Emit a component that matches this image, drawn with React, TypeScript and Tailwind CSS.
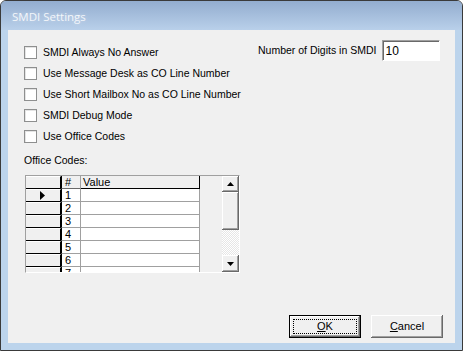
const options = [
  'SMDI Always No Answer',
  'Use Message Desk as CO Line Number',
  'Use Short Mailbox No as CO Line Number',
  'SMDI Debug Mode',
  'Use Office Codes',
];

const rows = ['1', '2', '3', '4', '5', '6', '7'];

const raised =
  'bg-[#f0f0f0] shadow-[inset_-1px_-1px_#696969,inset_1px_1px_#ffffff,inset_-2px_-2px_#a0a0a0]';

function Checkbox({ label }: { label: string }) {
  return (
    <label className="flex h-[21px] items-center gap-[6px]">
      <span className="box-border h-[13px] w-[13px] border border-[#8e8f8f] bg-white shadow-[inset_1px_1px_#e4e4e4]" />
      <span>{label}</span>
    </label>
  );
}

function Arrow({ down }: { down?: boolean }) {
  return (
    <svg width="7" height="4" viewBox="0 0 7 4">
      <path d={down ? 'M0 0h7L3.5 4z' : 'M0 4h7L3.5 0z'} fill="#000" />
    </svg>
  );
}

function OfficeGrid() {
  return (
    <div className="ml-[1px] mt-[8px] box-border flex h-[98px] w-[215px] border border-t-[#a0a0a0] border-l-[#a0a0a0] border-b-white border-r-white bg-[#f0f0f0]">
      <div className="flex-1 overflow-hidden text-[11px] leading-[12px]">
        {/* header */}
        <div className="flex h-[13px]">
          <div className="box-border w-[35px] border-t border-t-white border-b border-b-black border-r border-r-black bg-[#f0f0f0]" />
          <div className="box-border w-[20px] border-l border-l-black border-b border-b-[#696969] border-r border-r-[#a0a0a0] pl-[3px]">
            #
          </div>
          <div className="box-border w-[119px] border-b border-b-black border-r border-r-black pl-[2px]">
            Value
          </div>
        </div>
        {rows.map((n, i) => (
          <div key={n} className="flex h-[13px]">
            <div className="box-border flex w-[35px] items-center justify-end border-t border-t-white border-b border-b-black border-r border-r-black bg-[#f0f0f0] pr-[15px]">
              {i === 0 && (
                <svg width="5" height="9" viewBox="0 0 5 9">
                  <path d="M0 0l5 4.5L0 9z" fill="#000" />
                </svg>
              )}
            </div>
            <div className="box-border w-[20px] border-l border-l-black border-b border-b-[#a0a0a0] border-r border-r-[#a0a0a0] bg-white pl-[3px]">
              {n}
            </div>
            <div className="box-border w-[119px] border-b border-b-[#a0a0a0] border-r border-r-[#a0a0a0] bg-white" />
          </div>
        ))}
      </div>
      <div className="flex w-[17px] flex-col">
        <div className={`flex h-[16px] items-center justify-center ${raised}`}>
          <Arrow />
        </div>
        <div className={`h-[38px] ${raised}`} />
        <div className="h-[25px] bg-[repeating-conic-gradient(#e6e6e6_0_25%,#ffffff_0_50%)] bg-[length:2px_2px]" />
        <div className={`flex flex-1 items-center justify-center ${raised}`}>
          <Arrow down />
        </div>
      </div>
    </div>
  );
}

function Button({ children, isDefault }: { children: React.ReactNode; isDefault?: boolean }) {
  return (
    <button
      className={`relative box-border flex h-[23px] w-[72px] items-center justify-center bg-[#f0f0f0] text-[11px] ${
        isDefault
          ? 'border border-black shadow-[inset_-1px_-1px_#696969,inset_1px_1px_#ffffff,inset_-2px_-2px_#a0a0a0]'
          : 'shadow-[inset_-1px_-1px_#696969,inset_1px_1px_#ffffff,inset_-2px_-2px_#a0a0a0]'
      }`}
    >
      {isDefault && (
        <span className="absolute inset-[3px] border border-dotted border-black" />
      )}
      {children}
    </button>
  );
}

export default function App() {
  return (
    <div className="h-[351px] w-[463px] bg-white font-['Liberation_Sans',Arial,sans-serif] text-[10.5px] text-black">
      <div className="box-border flex h-full w-full flex-col overflow-hidden rounded-t-[6px] border border-[#3a3a3a] bg-[#bcd4ec]">
        <div className="flex h-[29px] shrink-0 items-center bg-gradient-to-b from-[#93adcf] to-[#b9d0ea] pl-[11px] pt-[2px] font-['Open_Sans',sans-serif] text-[11.5px] text-[#f3f6fa] [text-shadow:0_0_4px_rgba(255,255,255,0.4)]">
          SMDI Settings
        </div>
        <div className="flex flex-1 px-[7px] pb-[7px]">
          <div className="flex flex-1 flex-col bg-[#f0f0f0]">
            <div className="flex pt-[10px]">
              <div className="w-[250px] pl-[16px] pt-[2px]">
                {options.map((o) => (
                  <Checkbox key={o} label={o} />
                ))}
                <div className="mt-[6px] h-[14px] leading-[14px]">Office Codes:</div>
                <OfficeGrid />
              </div>
              <div className="flex h-[21px] items-center gap-[6px]">
                <span>Number of Digits in SMDI</span>
                <div className="box-border flex h-[21px] w-[58px] items-center border border-t-[#a0a0a0] border-l-[#a0a0a0] border-b-white border-r-white bg-white pl-[2px] text-[12px] shadow-[inset_1px_1px_#696969]">
                  10
                </div>
              </div>
            </div>
            <div className="mt-auto flex justify-end gap-[10px] pb-[5px] pr-[12px]">
              <Button isDefault>
                <span>
                  <u>O</u>K
                </span>
              </Button>
              <Button>
                <span>
                  <u>C</u>ancel
                </span>
              </Button>
            </div>
          </div>
        </div>
      </div>
    </div>
  );
}
